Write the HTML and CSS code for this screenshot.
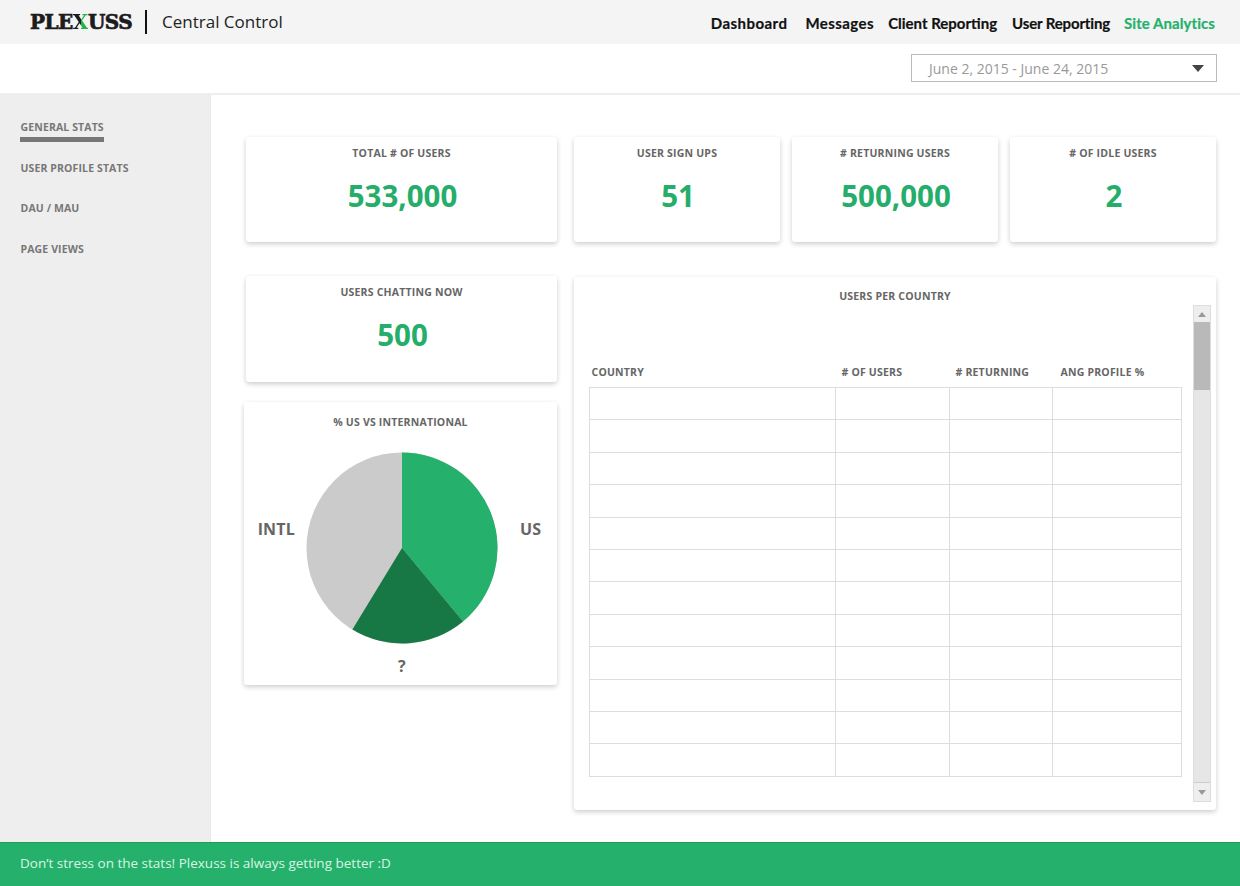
FILE: index.html
```html
<!DOCTYPE html>
<html lang="en">
<head>
<meta charset="utf-8">
<title>Plexuss Central Control</title>
<link rel="stylesheet" href="styles.css">
</head>
<body>
<div class="page">
  <header class="topbar">
    <div class="brand">
      <span class="logo">PLE<span class="logo-x">X</span>USS</span>
      <span class="brand-title">Central Control</span>
    </div>
    <nav class="nav">
      <a class="nav-item nav-dash">Dashboard</a>
      <a class="nav-item nav-msg">Messages</a>
      <a class="nav-item nav-client">Client Reporting</a>
      <a class="nav-item nav-user">User Reporting</a>
      <a class="nav-item active">Site Analytics</a>
    </nav>
  </header>
  <div class="filterbar">
    <div class="date-select">
      <span>June 2, 2015 - June 24, 2015</span>
      <i class="caret"></i>
    </div>
  </div>
  <div class="body-row">
    <aside class="sidebar">
      <a class="side-item current">GENERAL STATS</a>
      <a class="side-item">USER PROFILE STATS</a>
      <a class="side-item">DAU / MAU</a>
      <a class="side-item">PAGE VIEWS</a>
    </aside>
    <main class="main">
      <section class="row stats-row">
        <div class="card stat wide">
          <h3 class="card-title">TOTAL # OF USERS</h3>
          <div class="stat-value">533,000</div>
        </div>
        <div class="stat-group">
          <div class="card stat">
            <h3 class="card-title">USER SIGN UPS</h3>
            <div class="stat-value">51</div>
          </div>
          <div class="card stat">
            <h3 class="card-title"># RETURNING USERS</h3>
            <div class="stat-value">500,000</div>
          </div>
          <div class="card stat">
            <h3 class="card-title"># OF IDLE USERS</h3>
            <div class="stat-value">2</div>
          </div>
        </div>
      </section>
      <section class="row lower-row">
        <div class="left-col">
          <div class="card stat wide chat-card">
            <h3 class="card-title">USERS CHATTING NOW</h3>
            <div class="stat-value">500</div>
          </div>
          <div class="card pie-card">
            <h3 class="card-title">% US VS INTERNATIONAL</h3>
            <div class="pie-wrap">
              <span class="pie-label pie-intl">INTL</span>
              <svg class="pie" width="192" height="192" viewBox="-96 -96 192 192">
                <circle r="95.5" fill="#cbcbcb"/>
                <path d="M0 0V-95.5A95.5 95.5 0 0 1 61 73.5Z" fill="#25b16b"/>
                <path d="M0 0L61 73.5A95.5 95.5 0 0 1 -49.6 81.6Z" fill="#177745"/>
              </svg>
              <span class="pie-label pie-us">US</span>
            </div>
            <div class="pie-label pie-q">?</div>
          </div>
        </div>
        <div class="card table-card">
          <h3 class="card-title">USERS PER COUNTRY</h3>
          <div class="table-area">
            <div class="table-box">
              <table class="country-table">
                <thead>
                  <tr><th class="c1">COUNTRY</th><th class="c2"># OF USERS</th><th class="c3"># RETURNING</th><th>ANG PROFILE %</th></tr>
                </thead>
                <tbody>
                  <tr><td></td><td></td><td></td><td></td></tr>
                  <tr><td></td><td></td><td></td><td></td></tr>
                  <tr><td></td><td></td><td></td><td></td></tr>
                  <tr><td></td><td></td><td></td><td></td></tr>
                  <tr><td></td><td></td><td></td><td></td></tr>
                  <tr><td></td><td></td><td></td><td></td></tr>
                  <tr><td></td><td></td><td></td><td></td></tr>
                  <tr><td></td><td></td><td></td><td></td></tr>
                  <tr><td></td><td></td><td></td><td></td></tr>
                  <tr><td></td><td></td><td></td><td></td></tr>
                  <tr><td></td><td></td><td></td><td></td></tr>
                  <tr><td></td><td></td><td></td><td></td></tr>
                </tbody>
              </table>
            </div>
            <div class="scrollbar">
              <div class="sb-btn"><i class="sb-up"></i></div>
              <div class="sb-thumb"></div>
              <div class="sb-track"></div>
              <div class="sb-btn sb-btn-down"><i class="sb-down"></i></div>
            </div>
          </div>
        </div>
      </section>
    </main>
  </div>
  <footer class="footer">Don’t stress on the stats! Plexuss is always getting better :D</footer>
</div>
</body>
</html>
```
FILE: styles.css
```css
* { box-sizing: border-box; }
html, body { margin: 0; padding: 0; }
body { font-family: "Open Sans", "Liberation Sans", sans-serif; color: #666; background: #fff; }
.page { width: 1240px; height: 886px; display: flex; flex-direction: column; overflow: hidden; }

.topbar { height: 44px; background: #f4f4f4; display: flex; align-items: center; justify-content: space-between; padding: 0 25px 0 30px; flex: none; }
.brand { display: flex; align-items: center; }
.logo { font-family: "DejaVu Serif", "Liberation Serif", serif; font-weight: 700; font-size: 20px; line-height: 24px; color: #1c1c1c; -webkit-text-stroke: .7px #1c1c1c; letter-spacing: -.5px; width: 102px; white-space: nowrap; }
.logo-x { background: linear-gradient(90deg, #1c1c1c 0 52%, #22b24c 52% 100%); -webkit-background-clip: text; background-clip: text; color: transparent; -webkit-text-stroke: 0; }
.brand-title { margin-left: 13px; padding-left: 15px; border-left: 2px solid #111; font-size: 17px; line-height: 24px; color: #222; }
.nav { display: flex; align-items: center; padding-top: 2px; font-family: "Lato", "Liberation Sans", sans-serif; font-weight: 700; font-size: 15px; color: #111; -webkit-text-stroke: .2px currentColor; }
.nav-item { white-space: nowrap; }
.nav-dash { margin-right: 18px; letter-spacing: .45px; }
.nav-msg { margin-right: 14px; letter-spacing: .45px; }
.nav-client { margin-right: 15px; }
.nav-user { margin-right: 14px; letter-spacing: -.15px; }
.nav-item.active { color: #25b16b; letter-spacing: .07px; }

.filterbar { height: 51px; border-bottom: 2px solid #eee; display: flex; justify-content: flex-end; align-items: flex-start; padding: 10px 23px 0 0; flex: none; }
.date-select { width: 306px; height: 28px; border: 1px solid #bbb; display: flex; align-items: center; justify-content: space-between; padding: 0 12px 0 17px; font-size: 14px; color: #999; }
.caret { width: 0; height: 0; border-left: 6px solid transparent; border-right: 6px solid transparent; border-top: 7px solid #444; }

.body-row { flex: 1; display: flex; min-height: 0; }
.sidebar { width: 211px; flex: none; background: #eee; border-right: 1px solid #e8e8e8; padding-top: 25px; display: flex; flex-direction: column; align-items: flex-start; padding-left: 19.5px; }
.side-item { font-size: 10.5px; font-weight: 700; letter-spacing: .12px; line-height: 14px; color: #777; padding: 0 0 0 1px; margin-bottom: 26.3px; }
.side-item.current { border-bottom: 5px solid #777; padding-bottom: 3px; margin-bottom: 19px; }

.main { flex: 1; padding: 42px 24px 0 35px; }
.row { display: flex; }
.stats-row { gap: 17px; margin-bottom: 34px; }
.stat-group { flex: 1; display: flex; gap: 12px; }
.stat-group .stat { flex: 1; }
.lower-row { gap: 17px; align-items: flex-start; }
.left-col { width: 311px; flex: none; display: flex; flex-direction: column; gap: 20px; }

.card { background: #fff; border-radius: 3px; box-shadow: 0 2px 5px rgba(0,0,0,.2); }
.card-title { margin: 0; font-size: 10.5px; font-weight: 700; letter-spacing: .2px; line-height: 14px; color: #666; text-align: center; }
.stat { height: 105px; padding-top: 9px; }
.chat-card { height: 106px; }
.wide { width: 311px; flex: none; }
.stat-value { margin-top: 16px; padding-left: 2px; font-size: 29.5px; line-height: 40px; font-weight: 700; color: #25ad6a; text-align: center; }

.pie-card { width: 313px; margin-left: -2px; height: 283px; padding-top: 13px; }
.pie-wrap { margin-top: 23px; padding-right: 2px; display: flex; align-items: center; justify-content: center; }
.pie { display: block; flex: none; }
.pie-label { font-size: 16px; font-weight: 700; letter-spacing: .2px; line-height: 22px; color: #666; }
.pie-intl { margin: 0 11px 38px 0; }
.pie-us { margin: 0 0 38px 22px; }
.pie-q { margin: 11px 0 0; padding-left: 3px; text-align: center; }

.table-card { flex: 1; margin-top: 1px; height: 533px; padding: 12px 5px 0 15px; }
.table-card > .card-title { padding-right: 10px; }
.table-area { display: flex; gap: 11px; margin-top: 2px; }
.table-box { width: 593px; padding-top: 60px; }
.country-table { width: 593px; border-collapse: collapse; table-layout: fixed; }
.country-table th { font-size: 10.5px; font-weight: 700; letter-spacing: .2px; line-height: 14px; color: #666; text-align: left; padding: 0 0 8px 2px; }
.country-table th.c1 { width: 246px; }
.country-table th.c2 { width: 114px; padding-left: 6px; }
.country-table th.c3 { width: 103px; padding-left: 6px; }
.country-table th:last-child { padding-left: 8px; }
.country-table td { height: 32.4px; border: 1px solid #ddd; padding: 0; }
.scrollbar { width: 18px; height: 497px; background: #e6e6e6; border: 1px solid #ddd; display: flex; flex-direction: column; }
.sb-btn { height: 16px; flex: none; background: #eee; display: flex; align-items: center; justify-content: center; }
.sb-btn-down { height: 19px; border-top: 1px solid #ccc; }
.sb-thumb { height: 68px; flex: none; background: #b9b9b9; }
.sb-track { flex: 1; }
.sb-up { width: 0; height: 0; border-left: 4px solid transparent; border-right: 4px solid transparent; border-bottom: 5px solid #999; }
.sb-down { width: 0; height: 0; border-left: 4px solid transparent; border-right: 4px solid transparent; border-top: 5px solid #999; }

.footer { height: 44px; flex: none; background: #25b16b; border-top: 1px solid #1f9d5e; padding: 0 0 0 20px; color: #d8f5e4; font-size: 13.5px; line-height: 40px; }
```
